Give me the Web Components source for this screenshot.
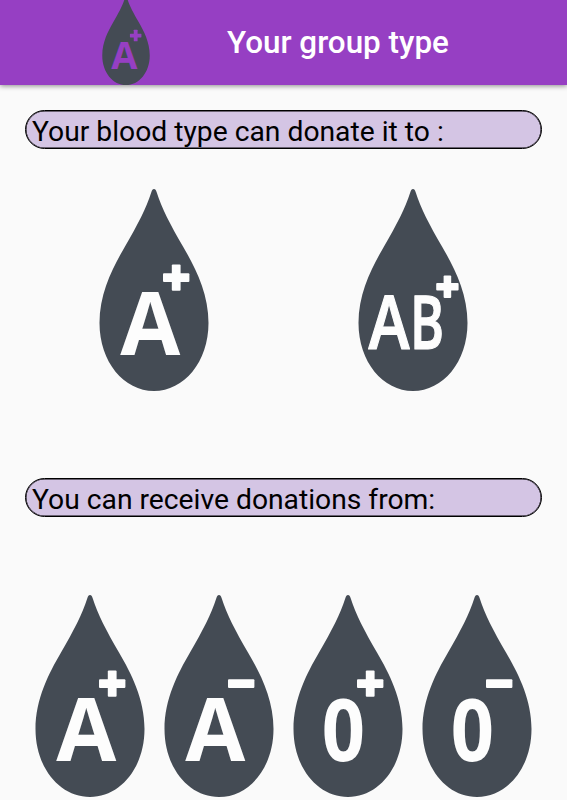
<!DOCTYPE html>
<html lang="en">
<head>
<meta charset="utf-8">
<title>Your group type</title>
<style>
  body {
    margin: 0;
    background: #fafafa;
    font-family: Roboto, sans-serif;
  }
</style>
</head>
<body>
<blood-screen></blood-screen>

<script>
// Each glyph: text, left edge, baseline, horizontal scale, font size, weight, outline
const GROUPS = {
  A: [["A", 21.2, 166, 1, 87, 700, 0]],
  0: [["0", 28.8, 166, 0.88, 86, 700, 0]],
  AB: [["A", 10.6, 160, 0.84, 74, 600, 1.2], ["B", 51.9, 160, 0.7, 74, 600, 1.2]],
};

class BloodDrop extends HTMLElement {
  constructor() {
    super();
    this.attachShadow({ mode: "open" });
  }

  connectedCallback() {
    const group = this.getAttribute("group");
    const rh = this.getAttribute("rh");

    const glyphs = GROUPS[group]
      .map(
        ([text, x, y, scale, size, weight, outline]) =>
          `<text transform="translate(${x} ${y}) scale(${scale} 1)" font-size="${size}" font-weight="${weight}" stroke-width="${outline}">${text}</text>`
      )
      .join("");

    // The sign is smaller and further out next to two letters
    const [cx, cy, arm, bar] = group === "AB" ? [89.4, 97.8, 22.4, 7.6] : [77.2, 88.6, 26.4, 8.8];
    const horizontal = `<rect x="${cx - arm / 2}" y="${cy - bar / 2}" width="${arm}" height="${bar}" rx="1" />`;
    const vertical = `<rect x="${cx - bar / 2}" y="${cy - arm / 2}" width="${bar}" height="${arm}" rx="1" />`;

    this.shadowRoot.innerHTML = `
      <svg viewBox="0 0 110 202">
        <path class="drop" d="M55 0C56.3 0 57 1 57.6 3C63 20 71 35 84 57.5C96 78 109.5 104 109.5 134C109.5 173 85 202 55 202C25 202 .5 173 .5 134C.5 104 14 78 26 57.5C39 35 47 20 52.4 3C53 1 53.7 0 55 0Z" />
        ${glyphs}
        ${horizontal}
        ${rh === "+" ? vertical : ""}
      </svg>
      <style>
        :host {
          display: block;
          width: 110px;
          height: 202px;
          flex: none;
        }

        svg {
          display: block;
          width: 100%;
          height: 100%;
          fill: var(--drop-label, #fdfdfd);
        }

        .drop {
          fill: #444b54;
        }

        text {
          font-family: "Open Sans", "Noto Sans", sans-serif;
          stroke: var(--drop-label, #fdfdfd);
          stroke-linejoin: round;
        }
      </style>
    `;
  }
}

class AppHeader extends HTMLElement {
  constructor() {
    super();
    this.attachShadow({ mode: "open" });
    this.shadowRoot.innerHTML = `
      <header>
        <div class="logo"><slot name="logo"></slot></div>
        <h1><slot></slot></h1>
      </header>
      <style>
        :host {
          display: block;
        }

        header {
          display: flex;
          height: 85px;
          background: #963fc3;
          box-shadow: 0 1px 5px rgba(0, 0, 0, 0.45);
        }

        .logo {
          display: flex;
          align-items: flex-end;
          height: 85px;
          padding-left: 102px;
          overflow: hidden;
        }

        ::slotted(blood-drop) {
          --drop-label: #963fc3;
          width: 48px;
          height: 88px;
        }

        h1 {
          margin: 0 0 0 77px;
          color: #fff;
          font-size: 31.4px;
          font-weight: 500;
          line-height: 86px;
          white-space: nowrap;
        }
      </style>
    `;
  }
}

class SectionLabel extends HTMLElement {
  constructor() {
    super();
    this.attachShadow({ mode: "open" });
    this.shadowRoot.innerHTML = `
      <h2><slot></slot></h2>
      <style>
        :host {
          display: block;
        }

        h2 {
          box-sizing: border-box;
          height: 39px;
          margin: 0;
          padding: 1px 0 0 6px;
          border: 1px solid #000;
          border-radius: 20px;
          background: #d4c5e4;
          box-shadow: inset 0 0 0 0.5px #000;
          color: #000;
          font-size: 28.25px;
          font-weight: 400;
          line-height: 40px;
          white-space: nowrap;
        }
      </style>
    `;
  }
}

class DropRow extends HTMLElement {
  constructor() {
    super();
    this.attachShadow({ mode: "open" });
    this.shadowRoot.innerHTML = `
      <slot></slot>
      <style>
        :host {
          display: grid;
          grid-auto-flow: column;
          grid-auto-columns: 1fr;
          justify-items: center;
        }

        slot {
          display: contents;
        }
      </style>
    `;
  }
}

class BloodScreen extends HTMLElement {
  constructor() {
    super();
    this.attachShadow({ mode: "open" });
    this.shadowRoot.innerHTML = `
      <app-header>
        <blood-drop slot="logo" group="A" rh="+"></blood-drop>
        Your group type
      </app-header>
      <main>
        <section>
          <section-label>Your blood type can donate it to :</section-label>
          <drop-row class="donate">
            <blood-drop group="A" rh="+"></blood-drop>
            <blood-drop group="AB" rh="+"></blood-drop>
          </drop-row>
        </section>
        <section>
          <section-label>You can receive donations from:</section-label>
          <drop-row class="receive">
            <blood-drop group="A" rh="+"></blood-drop>
            <blood-drop group="A" rh="-"></blood-drop>
            <blood-drop group="0" rh="+"></blood-drop>
            <blood-drop group="0" rh="-"></blood-drop>
          </drop-row>
        </section>
      </main>
      <style>
        :host {
          display: block;
          height: 800px;
          overflow: hidden;
        }

        main {
          display: flex;
          flex-direction: column;
          gap: 87px;
          padding: 25px 25px 0;
        }

        .donate {
          padding-top: 40px;
        }

        .receive {
          padding-top: 78px;
        }
      </style>
    `;
  }
}

customElements.define("blood-drop", BloodDrop);
customElements.define("app-header", AppHeader);
customElements.define("section-label", SectionLabel);
customElements.define("drop-row", DropRow);
customElements.define("blood-screen", BloodScreen);
</script>
</body>
</html>
